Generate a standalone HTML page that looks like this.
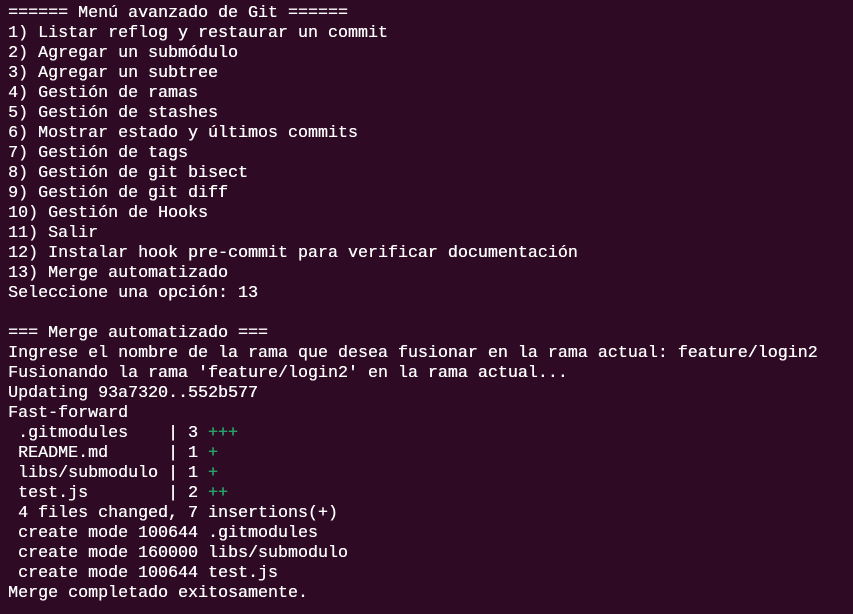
<!DOCTYPE html>
<html><head><meta charset="utf-8"><style>
html,body{margin:0;padding:0;background:#2f0a24;width:853px;height:614px;overflow:hidden}
pre{margin:0;position:absolute;left:8px;top:4px;font-family:"Liberation Mono",monospace;font-size:16.67px;line-height:20px;color:#ffffff;white-space:pre;text-shadow:0.3px 0 0 #fff}
.g{color:#26a269;text-shadow:0.3px 0 0 #26a269}
</style></head><body><pre>====== Menú avanzado de Git ======
1) Listar reflog y restaurar un commit
2) Agregar un submódulo
3) Agregar un subtree
4) Gestión de ramas
5) Gestión de stashes
6) Mostrar estado y últimos commits
7) Gestión de tags
8) Gestión de git bisect
9) Gestión de git diff
10) Gestión de Hooks
11) Salir
12) Instalar hook pre-commit para verificar documentación
13) Merge automatizado
Seleccione una opción: 13

=== Merge automatizado ===
Ingrese el nombre de la rama que desea fusionar en la rama actual: feature/login2
Fusionando la rama 'feature/login2' en la rama actual...
Updating 93a7320..552b577
Fast-forward
 .gitmodules    | 3 <span class="g">+++</span>
 README.md      | 1 <span class="g">+</span>
 libs/submodulo | 1 <span class="g">+</span>
 test.js        | 2 <span class="g">++</span>
 4 files changed, 7 insertions(+)
 create mode 100644 .gitmodules
 create mode 160000 libs/submodulo
 create mode 100644 test.js
Merge completado exitosamente.</pre></body></html>
